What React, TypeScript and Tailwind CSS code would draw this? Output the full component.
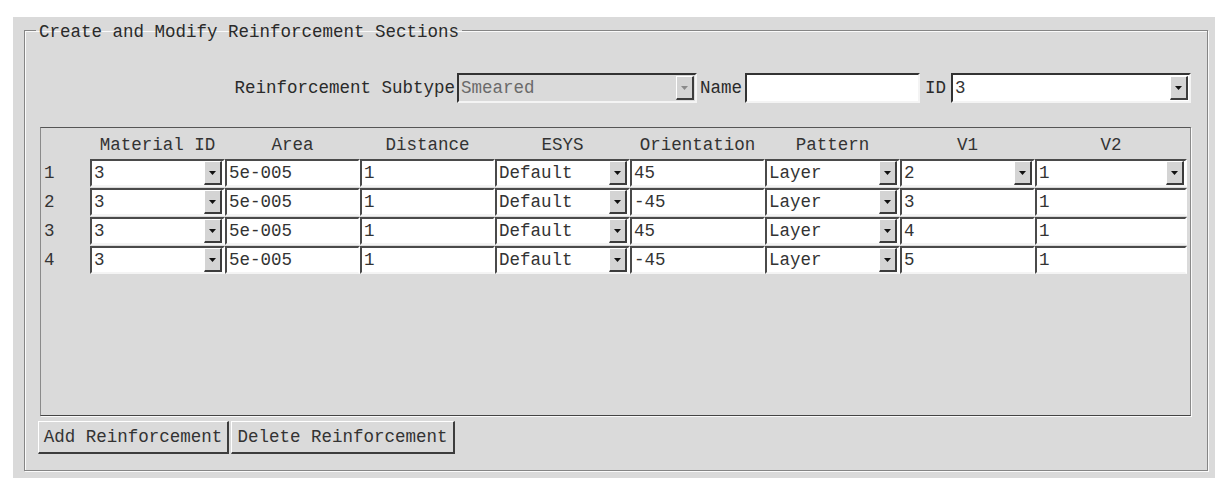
import React from 'react';

type Cell = { value: string; drop?: boolean };

const rows: Cell[][] = [
  [
    { value: '3', drop: true },
    { value: '5e-005' },
    { value: '1' },
    { value: 'Default', drop: true },
    { value: '45' },
    { value: 'Layer', drop: true },
    { value: '2', drop: true },
    { value: '1', drop: true },
  ],
  [
    { value: '3', drop: true },
    { value: '5e-005' },
    { value: '1' },
    { value: 'Default', drop: true },
    { value: '-45' },
    { value: 'Layer', drop: true },
    { value: '3' },
    { value: '1' },
  ],
  [
    { value: '3', drop: true },
    { value: '5e-005' },
    { value: '1' },
    { value: 'Default', drop: true },
    { value: '45' },
    { value: 'Layer', drop: true },
    { value: '4' },
    { value: '1' },
  ],
  [
    { value: '3', drop: true },
    { value: '5e-005' },
    { value: '1' },
    { value: 'Default', drop: true },
    { value: '-45' },
    { value: 'Layer', drop: true },
    { value: '5' },
    { value: '1' },
  ],
];

const headers = ['Material ID', 'Area', 'Distance', 'ESYS', 'Orientation', 'Pattern', 'V1', 'V2'];

const DropButton: React.FC<{ disabled?: boolean }> = ({ disabled }) => (
  <span className="ml-auto flex h-full w-[18px] shrink-0 items-center justify-center border border-t-white border-l-white border-b-2 border-r-2 border-b-[#3c3c3c] border-r-[#3c3c3c] bg-[#d4d4d4]">
    <svg width="7" height="4" viewBox="0 0 7 4">
      <path d="M0 0h7L3.5 4z" fill={disabled ? '#8a8a8a' : '#111'} />
    </svg>
  </span>
);

const Field: React.FC<{ cell: Cell }> = ({ cell }) => (
  <div className="flex h-[28px] items-center border-2 border-t-[#4a4a4a] border-l-[#4a4a4a] border-r-white border-b-[#f4f4f4] bg-white pl-[2px] pr-[1px] text-[#333]">
    <span className="whitespace-pre">{cell.value}</span>
    {cell.drop && <DropButton />}
  </div>
);

const RaisedButton: React.FC<{ label: string; width: string }> = ({ label, width }) => (
  <button
    className={`flex h-[33px] ${width} items-center justify-center border border-t-white border-l-white border-b-2 border-r-2 border-b-[#3c3c3c] border-r-[#3c3c3c] bg-[#dadada] text-[#333]`}
  >
    {label}
  </button>
);

export default function App() {
  return (
    <div className="h-[482px] w-[1226px] bg-white pl-[13px] pt-[17px] font-['Liberation_Mono',monospace] text-[17.5px] leading-[20px] text-[#2a2a2a]">
      <div className="h-[461px] w-[1202px] bg-[#dadada] pl-[11px] pr-[7px] pt-[3px]">
        <fieldset className="h-[451px] w-[1184px] border border-[#858585] pl-[10px] pr-[10px] shadow-[inset_1px_1px_0_#fafafa,1px_1px_0_#fafafa]">
          <legend className="ml-[1px] px-[3px]">
            <span className="relative top-[2px]">Create and Modify Reinforcement Sections</span>
          </legend>

          <div className="mt-[33px] flex h-[30px] items-center">
            <span className="ml-[198px] w-[222px] text-right">Reinforcement Subtype</span>
            <div className="ml-[2px] flex h-[30px] w-[240px] items-center border-2 border-t-[#333] border-l-[#333] border-r-[#f4f4f4] border-b-[#f4f4f4] bg-[#dadada] pl-[2px] pr-[1px] py-[1px] text-[#6a6a6a]">
              <span>Smeared</span>
              <DropButton disabled />
            </div>
            <span className="ml-[3px]">Name</span>
            <div className="ml-[3px] h-[30px] w-[175px] border-2 border-t-[#333] border-l-[#333] border-r-[#f4f4f4] border-b-[#f4f4f4] bg-white" />
            <span className="ml-[5px]">ID</span>
            <div className="ml-[5px] flex h-[30px] w-[240px] items-center border-2 border-t-[#333] border-l-[#333] border-r-[#f4f4f4] border-b-[#f4f4f4] bg-white pl-[2px] pr-[1px] py-[1px] text-[#333]">
              <span>3</span>
              <DropButton />
            </div>
          </div>

          <div className="ml-[5px] mt-[24px] h-[289px] w-[1151px] border border-t-[#555] border-l-[#8a8a8a] border-b-[#444] border-r-[#8a8a8a] shadow-[1px_1px_0_#fafafa]">
            <div className="grid h-[31px] grid-cols-[49px_repeat(7,135px)_152px] items-center pt-[3px] text-[#333]">
              <span />
              {headers.map((h) => (
                <span key={h} className="text-center">
                  {h}
                </span>
              ))}
            </div>
            <div className="flex flex-col gap-[1px]">
              {rows.map((row, i) => (
                <div key={i} className="grid grid-cols-[49px_repeat(7,135px)_152px] items-center">
                  <span className="pl-[3px] text-[#333]">{i + 1}</span>
                  {row.map((cell, j) => (
                    <Field key={j} cell={cell} />
                  ))}
                </div>
              ))}
            </div>
          </div>

          <div className="ml-[3px] mt-[5px] flex gap-[2px]">
            <RaisedButton label="Add Reinforcement" width="w-[191px]" />
            <RaisedButton label="Delete Reinforcement" width="w-[224px]" />
          </div>
        </fieldset>
      </div>
    </div>
  );
}
